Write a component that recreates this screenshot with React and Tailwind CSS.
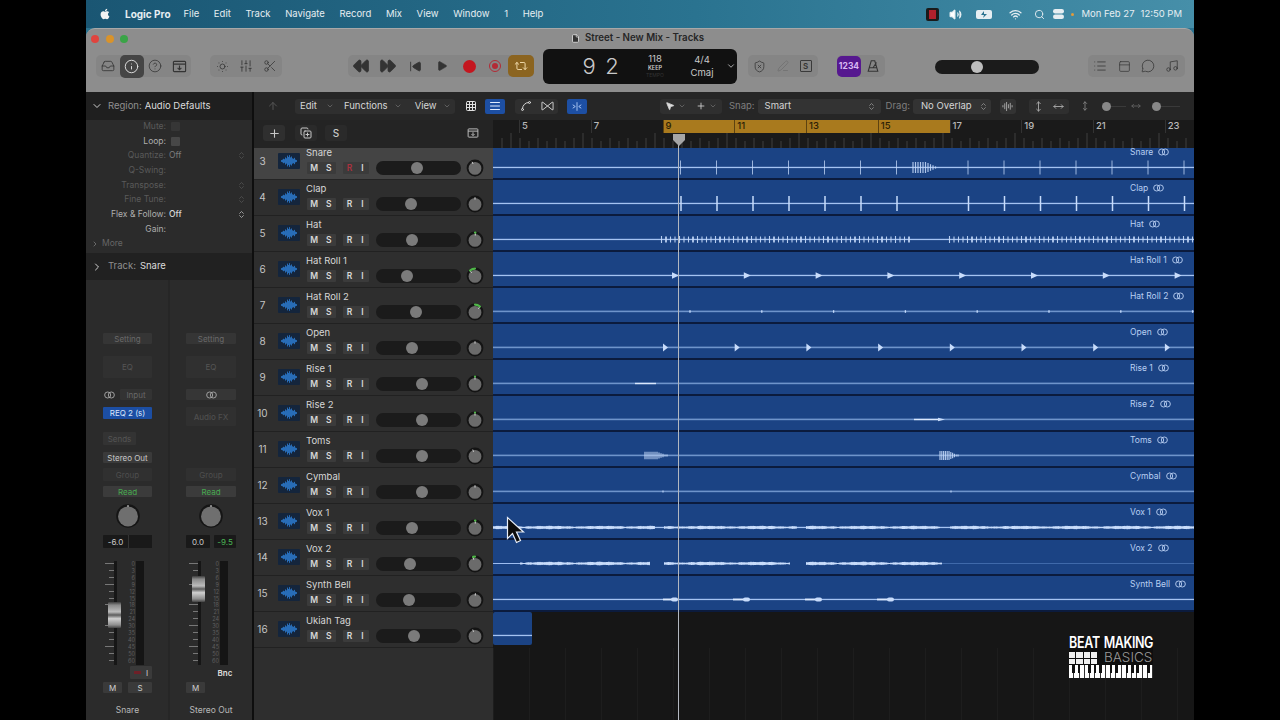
import React from 'react';
import { Inbox, Info, CircleHelp, SunDim, SlidersVertical, Scissors, Rewind, FastForward, SkipBack, Play, Repeat2, ChevronDown, ChevronRight, ChevronsUpDown, ShieldX, PenLine, List, PanelTop, MessageCircle, Music, Plus, CopyPlus, Volume2, Wifi, Search, MousePointer2, Grid3x3, AlignJustify, Spline, ArrowUp, File, MoveHorizontal, MoveVertical, AudioLines } from 'lucide-react';
import { FaApple } from 'react-icons/fa';

const tracks = [
  { n: 3, name: 'Snare', knob: 417, pan: -8, sel: true },
  { n: 4, name: 'Clap', knob: 411, pan: 0 },
  { n: 5, name: 'Hat', knob: 412, pan: 1, g: 6 },
  { n: 6, name: 'Hat Roll 1', knob: 407, pan: -14, g: 40 },
  { n: 7, name: 'Hat Roll 2', knob: 416, pan: 14, g: 40 },
  { n: 8, name: 'Open', knob: 412, pan: 0 },
  { n: 9, name: 'Rise 1', knob: 422, pan: 0, g: 8 },
  { n: 10, name: 'Rise 2', knob: 422, pan: 0, g: 8 },
  { n: 11, name: 'Toms', knob: 422, pan: -6 },
  { n: 12, name: 'Cymbal', knob: 422, pan: 0 },
  { n: 13, name: 'Vox 1', knob: 412, pan: 1, g: 8 },
  { n: 14, name: 'Vox 2', knob: 410, pan: -5, g: 24 },
  { n: 15, name: 'Synth Bell', knob: 409, pan: 1 },
  { n: 16, name: 'Ukiah Tag', knob: 414, pan: -6 },
];

const X = (x) => x - 493;
const Y = 23.5;
const range = (a, step, n) => Array.from({ length: n }, (_, i) => a + step * i);

function noise(a, b, scale = 1) {
  let up = '', dn = '';
  for (let x = a; x <= b; x += 1) {
    const m = Math.abs(Math.sin(x * 1.37) * Math.sin(x * 0.31 + 1)) * 0.7 + Math.abs(Math.sin(x * 0.06)) * 0.7;
    const h = (0.45 + m * 1.05) * scale;
    up += `${up ? 'L' : 'M'}${X(x)} ${Y - h} `;
    dn = `L${X(x)} ${Y + h} ` + dn;
  }
  return up + dn + 'Z';
}

const Tick = ({ x, h, w = 1, o = 1 }) => <line x1={X(x)} x2={X(x)} y1={Y - h} y2={Y + h} stroke="#c8dcfb" strokeWidth={w} opacity={o} />;
const Tri = ({ x, h, w }) => <path d={`M${X(x)} ${Y - h}L${X(x) + w} ${Y}L${X(x)} ${Y + h}Z`} fill="#c8dcfb" />;
const Seg = ({ a, b, t = 1.4 }) => <rect x={X(a)} y={Y - t / 2} width={b - a} height={t} fill="#dbe8fd" />;

function Burst({ a, b, h, step = 2.5 }) {
  const xs = [];
  for (let x = a; x < b; x += step) xs.push(x);
  return <>{xs.map((x) => {
    const p = (x - a) / (b - a);
    return <Tick key={x} x={x} w={1.2} h={p < 0.5 ? h : Math.max(1, h * (1 - (p - 0.5) * 2))} o={0.85} />;
  })}</>;
}

const snarePos = [...range(680.5, 36, 7), ...range(968, 36, 7)];
const waves = {
  Snare: <>{snarePos.map((x) => <Tick key={x} x={x} h={7} o={0.75} />)}<Burst a={913} b={938} h={5.5} /></>,
  Clap: <>{snarePos.map((x) => <Tick key={x} x={x + 0.5} h={7.5} w={1.5} />)}</>,
  Hat: <>{[...range(661.5, 4.5, 56), ...range(949.5, 4.5, 55)].map((x, i) => <Tick key={x} x={x} h={i % 4 === 0 ? 3.5 : 3} w={i % 6 === 1 ? 1.8 : 1.1} o={0.9} />)}</>,
  'Hat Roll 1': <>{range(672, 71.8, 8).map((x) => <Tri key={x} x={x} h={3.2} w={7} />)}</>,
  'Hat Roll 2': <>{range(690, 71.8, 8).map((x) => <Tick key={x} x={x} h={1.3} w={1.3} />)}</>,
  Open: <>{range(663, 71.7, 8).map((x) => <Tri key={x} x={x} h={4} w={5} />)}</>,
  'Rise 1': <Seg a={635} b={656} />,
  'Rise 2': <><Seg a={914} b={940} /><Tri x={938} h={1.8} w={7} /></>,
  Toms: <><Burst a={645} b={668} h={3.8} step={2} /><Burst a={940} b={958} h={4.5} step={1.8} /></>,
  Cymbal: <><Tick x={663} h={1} /><Tick x={951} h={1} /></>,
  'Vox 1': <>{[[493, 655], [664, 797], [806, 940], [950, 1194]].map(([a, b]) => <path key={a} d={noise(a, b)} fill="#c8dcfb" />)}</>,
  'Vox 2': <>{[[520, 650], [664, 790], [806, 942]].map(([a, b]) => <path key={a} d={noise(a, b, 1.05)} fill="#c8dcfb" />)}</>,
  'Synth Bell': <>{[[663, 678], [733, 750], [805, 822], [877, 894]].map(([a, b]) => <g key={a}><Seg a={a} b={b - 6} t={1.8} /><rect x={X(b - 7)} y={Y - 2} width={7} height={4} rx={2} fill="#c8dcfb" /></g>)}</>,
  'Ukiah Tag': null,
};
const dim = new Set(['Hat Roll 2', 'Open', 'Rise 1', 'Rise 2', 'Toms', 'Cymbal']);

function Link({ className = '' }) {
  return (
    <svg viewBox="0 0 12 8" className={`w-[11px] h-[8px] ${className}`} fill="none" stroke="currentColor" strokeWidth="1">
      <circle cx="4" cy="4" r="3.3" /><circle cx="8" cy="4" r="3.3" />
    </svg>
  );
}

function Lane({ t }) {
  const last = t.name === 'Ukiah Tag';
  return (
    <div className={`relative flex-1 h-[36px] ${last ? 'bg-[#161616]' : 'bg-[#0b1b3d]'}`}>
      <div className={`relative bg-[#1b4384] ${last ? 'w-[39px] h-[33px] rounded-[2px]' : 'h-[34px]'}`}>
        <svg viewBox={`0 0 ${last ? 39 : 701} 34`} className={`absolute left-0 top-0 ${last ? 'w-[39px]' : 'w-[701px]'} h-[34px]`}>
          {t.name === 'Vox 2' ? (
            <>
              <rect x="0" y="23" width="27" height="1" fill="#9dbcf0" />
              <rect x="449" y="23" width="252" height="1" fill="#3f69aa" />
            </>
          ) : (
            <rect x="0" y={dim.has(t.name) ? 22.6 : 22.8} width="701" height={dim.has(t.name) ? 1.6 : 1.3} fill={dim.has(t.name) ? '#6f94cb' : '#a5c3f2'} />
          )}
          {waves[t.name]}
        </svg>
        {!last && (
          <div className="absolute left-[637px] top-[4px] flex items-center gap-[5px] text-[8.5px] leading-[7px] text-[#b9cff2]">
            <span>{t.name}</span>
            <Link />
          </div>
        )}
      </div>
    </div>
  );
}

function MiniButton({ label, red }) {
  return <span className={`flex-1 text-center text-[8.5px] font-semibold leading-[12px] ${red ? 'text-[#a8323f]' : 'text-[#d8d8d8]'}`}>{label}</span>;
}

function Pan({ t }) {
  const deg = t.pan * 3;
  const a = ((deg - 90) * Math.PI) / 180;
  const r = 7.4;
  const ex = 9 + r * Math.cos(a);
  const ey = 9 + r * Math.sin(a);
  return (
    <svg viewBox="0 0 18 18" className="w-[18px] h-[18px] ml-[5px] shrink-0">
      <circle cx="9" cy="9" r="8.4" fill="#141414" />
      <circle cx="9" cy="9.4" r="6.4" fill="#6b6b6b" />
      <line x1={9 + 4.8 * Math.cos(a)} y1={9.4 + 4.8 * Math.sin(a)} x2={9 + 7.2 * Math.cos(a)} y2={9.4 + 7.2 * Math.sin(a)} stroke="#d0d0d0" strokeWidth="1" />
      {t.g ? <path d={`M9 1.6A${r} ${r} 0 0 ${t.pan < 0 ? 0 : 1} ${ex} ${ey}`} fill="none" stroke="#4fb548" strokeWidth="2.2" strokeLinecap="round" /> : null}
    </svg>
  );
}

function TrackWave() {
  const hs = [1, 1.5, 2.5, 2, 4, 3, 6, 4.5, 6.5, 4, 5, 3, 2.5, 3.5, 1.5, 1];
  return (
    <svg viewBox="0 0 22 16" className="w-[22px] h-[16px]">
      {hs.map((h, i) => <line key={i} x1={3.5 + i} x2={3.5 + i} y1={8 - h * 0.9} y2={8 + h * 0.9} stroke="#2a76c6" strokeWidth="0.9" />)}
    </svg>
  );
}

function TrackHeader({ t }) {
  return (
    <div className={`relative flex w-[239px] h-[36px] shrink-0 border-b ${t.sel ? 'bg-[#444444] border-[#242424]' : 'bg-[#2e2e2e] border-[#212121]'}`}>
      <div className="w-[17px] flex items-center justify-center text-[10px] text-[#c4c4c4]">{t.n}</div>
      <div className="ml-[7px] mt-[9px] w-[22px] h-[16px] bg-[#14253c] rounded-[1px]">
        <TrackWave />
      </div>
      <div className="ml-[6px] pt-[3px]">
        <div className="text-[9.5px] leading-[12px] text-[#d6d6d6] whitespace-nowrap">{t.name}</div>
        <div className="flex items-center h-[18px]">
          <div className="flex w-[29px] h-[12px] ml-[1px] bg-[#3b3b3b] rounded-[1px]"><MiniButton label="M" /><MiniButton label="S" /></div>
          <div className="flex w-[26px] h-[12px] ml-[7px] bg-[#3b3b3b] rounded-[1px]"><MiniButton label="R" red={t.sel} /><MiniButton label="I" /></div>
          <div className="relative w-[85px] h-[14px] ml-[7px] rounded-full bg-[#1b1b1b]">
            <span className="absolute top-[1px] w-[12px] h-[12px] rounded-full bg-[#7b7b7b]" style={{ left: t.knob - 376 - 6 }} />
          </div>
          <Pan t={t} />
        </div>
      </div>
    </div>
  );
}

const Btn = ({ children, className = '' }) => <div className={`flex items-center justify-center ${className}`}>{children}</div>;

function TrayDown({ size = 15, className = '' }) {
  return (
    <svg viewBox="0 0 16 16" width={size} height={size} fill="none" stroke="currentColor" strokeWidth="1.2" className={className}>
      <rect x="1.5" y="2.5" width="13" height="11" rx="1" />
      <path d="M1.5 5.5h13M8 7v4M6 9.5l2 2 2-2" />
    </svg>
  );
}

function Toolbar() {
  return (
    <div className="relative h-[64px] shrink-0 bg-[#8d8d8d] rounded-t-[9px] border-t border-[#a8a8a8] text-[#343434]">
      <div className="flex items-center h-[19px] pl-[5px]">
        <span className="w-[8px] h-[8px] rounded-full bg-[#e0443e]" />
        <span className="w-[8px] h-[8px] rounded-full bg-[#d9932a] ml-[7px]" />
        <span className="w-[8px] h-[8px] rounded-full bg-[#3aa447] ml-[6px]" />
        <File size={9} className="ml-[443px] text-[#eee] fill-[#333]" />
        <span className="ml-[5px] text-[9.7px] font-semibold text-[#262626] whitespace-nowrap">Street - New Mix - Tracks</span>
      </div>
      <div className="flex items-center h-[36px]">
        <div className="flex items-center h-[22px] ml-[10px] w-[95px] bg-[#858585] rounded-[5px]">
          <Btn className="w-[24px]"><Inbox size={14} strokeWidth={1.4} /></Btn>
          <Btn className="w-[24px] h-[23px] bg-[#454545] rounded-[5px] text-[#e2e2e2]"><Info size={15} strokeWidth={1.5} /></Btn>
          <Btn className="w-[24px]"><CircleHelp size={14} strokeWidth={1.3} /></Btn>
          <Btn className="w-[24px]"><TrayDown /></Btn>
        </div>
        <div className="flex items-center h-[22px] ml-[19px] w-[72px] bg-[#858585] rounded-[5px]">
          <Btn className="w-[24px]"><SunDim size={15} strokeWidth={1.3} /></Btn>
          <Btn className="w-[24px]"><SlidersVertical size={14} strokeWidth={1.4} /></Btn>
          <Btn className="w-[24px]"><Scissors size={14} strokeWidth={1.3} /></Btn>
        </div>
        <div className="flex items-center h-[22px] ml-[66px] w-[186px] bg-[#858585] rounded-[5px]">
          <Btn className="w-[26px]"><Rewind size={18} fill="#333" strokeWidth={1} /></Btn>
          <Btn className="w-[28px]"><FastForward size={18} fill="#333" strokeWidth={1} /></Btn>
          <Btn className="w-[26px]"><SkipBack size={13} fill="#333" strokeWidth={1.6} /></Btn>
          <Btn className="w-[28px]"><Play size={12} fill="#333" strokeWidth={1} /></Btn>
          <Btn className="w-[26px]"><span className="w-[13px] h-[13px] rounded-full bg-[#c4161f]" /></Btn>
          <Btn className="w-[26px]"><span className="flex items-center justify-center w-[12px] h-[12px] rounded-full border border-[#b32a35]"><span className="w-[6px] h-[6px] rounded-full bg-[#b32a35]" /></span></Btn>
          <Btn className="w-[26px] h-[22px] bg-[#8b6420] rounded-[5px] text-[#f4dfb0]"><Repeat2 size={14} strokeWidth={1.6} /></Btn>
        </div>
        <div className="relative flex items-center h-[35px] ml-[9px] w-[194px] bg-[#111111] rounded-[6px] text-[#c9c9c9]">
          <span className="ml-[34px] w-[24px] text-center text-[22px] font-light leading-none">9</span>
          <span className="w-[22px] text-center text-[22px] font-light leading-none">2</span>
          <div className="ml-[19px] w-[26px] text-center leading-none">
            <div className="text-[9.5px]">118</div>
            <div className="text-[5.5px] font-semibold mt-[2px]">KEEP</div>
            <div className="text-[5px] text-[#333] mt-[2px]">TEMPO</div>
          </div>
          <div className="ml-[21px] w-[26px] text-center leading-none text-[9.5px]">
            <div>4/4</div>
            <div className="mt-[4px]">Cmaj</div>
          </div>
          <ChevronDown size={10} className="ml-[11px]" />
        </div>
        <div className="flex items-center h-[22px] ml-[11px] w-[70px] bg-[#858585] rounded-[5px]">
          <Btn className="w-[24px] ml-[-1px]"><ShieldX size={13} strokeWidth={1.4} /></Btn>
          <Btn className="w-[23px] text-[#747474]"><PenLine size={12} /></Btn>
          <Btn className="w-[23px]"><span className="w-[12px] h-[12px] border border-[#3a3a3a] rounded-[1px] text-[8px] font-semibold leading-[10px] text-center">S</span></Btn>
        </div>
        <div className="flex items-center h-[22px] ml-[19px] w-[48px] bg-[#858585] rounded-[5px]">
          <Btn className="w-[24px] h-[21px] bg-[#56188f] rounded-[5px] text-[8.5px] font-bold text-[#d8b8f2]">1234</Btn>
          <Btn className="w-[24px]">
            <svg viewBox="0 0 16 16" width="14" height="14" fill="none" stroke="currentColor" strokeWidth="1.2"><path d="M6 2h4l3.5 12h-11zM4 10h8M8 10l4-6" /></svg>
          </Btn>
        </div>
        <div className="relative w-[104px] h-[14px] ml-[50px] mt-[2px] rounded-full bg-[#1b1b1b]">
          <span className="absolute left-[36px] top-[1px] w-[12px] h-[12px] rounded-full bg-[#bdbdbd]" />
        </div>
        <div className="flex items-center h-[22px] ml-[49px] w-[97px] bg-[#858585] rounded-[5px]">
          <Btn className="w-[24px]"><List size={14} strokeWidth={1.3} /></Btn>
          <Btn className="w-[24px]"><PanelTop size={13} strokeWidth={1.3} /></Btn>
          <Btn className="w-[24px]"><MessageCircle size={14} strokeWidth={1.3} /></Btn>
          <Btn className="w-[24px]"><Music size={14} strokeWidth={1.3} /></Btn>
        </div>
      </div>
    </div>
  );
}

function MenuBar() {
  const items = ['File', 'Edit', 'Track', 'Navigate', 'Record', 'Mix', 'View', 'Window', '1', 'Help'];
  return (
    <div className="h-[28px] shrink-0 flex items-center bg-[linear-gradient(90deg,#1a5673,#2a7390_55%,#468fa9)] text-[#e6eef2] text-[9.5px]">
      <FaApple size={12} className="ml-[13px] text-[#f2f2f2]" />
      <span className="ml-[14px] font-bold text-[10px]">Logic Pro</span>
      <div className="flex gap-[14.6px] ml-[13px]">{items.map((m) => <span key={m}>{m}</span>)}</div>
      <span className="ml-auto flex items-center justify-center w-[13px] h-[13px] rounded-[2px] bg-[#1a1a1a]"><span className="w-[7px] h-[9px] bg-[#b0202c]" /></span>
      <Volume2 size={13} fill="#fff" className="ml-[10px]" />
      <svg viewBox="0 0 18 9" className="w-[18px] h-[9px] ml-[14px]"><rect x="0" y="0" width="16" height="9" rx="2" fill="#e6eef2" /><path d="M8 1L5 5h3l-1 3 4-4H8z" fill="#2a7390" /></svg>
      <Wifi size={13} strokeWidth={2.4} className="ml-[15px]" />
      <Search size={11} strokeWidth={2} className="ml-[12px]" />
      <svg viewBox="0 0 12 12" className="w-[12px] h-[12px] ml-[8px]" fill="#e6eef2"><rect x="0" y="1" width="11" height="4.4" rx="2.2" /><rect x="0" y="6.6" width="11" height="4.4" rx="2.2" /></svg>
      <span className="w-[3px] h-[3px] rounded-full bg-[#e29b3a] ml-[6px]" />
      <span className="ml-[8px] whitespace-nowrap">Mon Feb 27</span>
      <span className="ml-[6px] mr-[12px] whitespace-nowrap">12:50 PM</span>
    </div>
  );
}

const params = [
  ['Mute:', 'd', 'box-d'], ['Loop:', 'n', 'box'], ['Quantize:', 'd', 'Off'], ['Q-Swing:', 'd', ''], ['Transpose:', 'd', 'arrows'], ['Fine Tune:', 'd', 'arrows'], ['Flex & Follow:', 'n', 'Off!'], ['Gain:', 'n', ''],
];

function Inspector() {
  return (
    <div className="w-[168px] shrink-0 flex flex-col bg-[#2b2b2b] border-r-2 border-[#0e0e0e]">
      <div className="h-[28px] shrink-0 flex items-center bg-[#1f1f1f]">
        <ChevronDown size={12} className="ml-[5px] text-[#cfcfcf]" />
        <span className="ml-[5px] text-[9.5px] text-[#8f8f8f]">Region:</span>
        <span className="ml-[3px] text-[9.5px] text-[#dcdcdc]">Audio Defaults</span>
      </div>
      <div className="h-[134px] shrink-0 -mt-[1px] text-[8.5px]">
        {params.map(([l, k, v]) => (
          <div key={l} className="relative flex items-center h-[14.7px]">
            <span className={`w-[80px] text-right whitespace-nowrap ${k === 'd' ? 'text-[#5a5a5a]' : 'text-[#aeaeae]'}`}>{l}</span>
            {v === 'box' && <span className="ml-[5px] w-[9px] h-[9px] bg-[#474747] rounded-[1px]" />}
            {v === 'box-d' && <span className="ml-[5px] w-[9px] h-[9px] bg-[#363636] rounded-[1px]" />}
            {v === 'Off' && <span className="ml-[3px] text-[#7d7d7d]">Off</span>}
            {v === 'Off!' && <span className="ml-[3px] text-[#d8d8d8] font-medium">Off</span>}
            {(v === 'Off' || v === 'arrows' || v === 'Off!') && <ChevronsUpDown size={9} className={`absolute left-[151px] ${v === 'Off!' ? 'text-[#bdbdbd]' : 'text-[#555]'}`} />}
          </div>
        ))}
        <div className="flex items-center h-[14.7px] pl-[5px] text-[#666]"><ChevronRight size={8} className="text-[#888]" /><span className="ml-[3px]">More</span></div>
      </div>
      <div className="h-[27px] shrink-0 flex items-center bg-[#212121]">
        <ChevronRight size={12} className="ml-[5px] text-[#cfcfcf]" />
        <span className="ml-[5px] text-[9.5px] text-[#8f8f8f]">Track:</span>
        <span className="ml-[4px] text-[9.5px] text-[#dcdcdc]">Snare</span>
      </div>
      <div className="flex-1 flex">
        <Strip first />
        <Strip />
      </div>
    </div>
  );
}

const Box = ({ children, className = '' }) => <div className={`flex items-center justify-center rounded-[1px] text-[8px] ${className}`}>{children}</div>;
const scale = ['0', '3', '6', '9', '12', '15', '18', '21', '24', '30', '35', '40', '45', '50', '60'];

function Fader({ first }) {
  const ticks = range(2, 6.9, 15);
  return (
    <div className={`relative h-[104px] mt-[13px] flex ${first ? 'ml-[1px]' : 'ml-[2px]'}`}>
      <div className="relative w-[10px]">
        {ticks.map((y, i) => <span key={y} className={`absolute right-0 h-[1px] bg-[#777] ${i % 3 === 0 ? 'w-[9px]' : 'w-[5px]'}`} style={{ top: y }} />)}
      </div>
      <div className="w-[3px] bg-[#161616] h-full" />
      <div className={`absolute left-[4px] w-[13px] h-[26px] rounded-[1px] bg-[linear-gradient(#3d3d3d,#8a8a8a_12%,#bdbdbd_38%,#5c5c5c_50%,#d0d0d0_64%,#8f8f8f_88%,#444)] ${first ? 'top-[41px]' : 'top-[15px]'}`} />
      <div className="relative w-[18px] h-full">
        {scale.map((s, i) => <span key={s} className="absolute right-[0px] text-[5.5px] leading-[6px] text-[#5f5f5f]" style={{ top: i * 6.9 }}>{s}</span>)}
      </div>
      <div className="ml-[1px] w-[8px] bg-[#151515] h-full" />
    </div>
  );
}

function Strip({ first }) {
  const x = first ? 'ml-[17px] w-[49px]' : 'ml-[16px] w-[50px]';
  return (
    <div className={`flex-1 ${first ? 'border-r-[2px] border-[#262626]' : ''}`}>
      <div className={x}>
        <Box className="mt-[53px] h-[11px] bg-[#353535] text-[#6a6a6a]">Setting</Box>
        <Box className="mt-[12px] h-[22px] bg-[#303030] text-[#555]">EQ</Box>
        {first ? (
          <div className="mt-[11px] h-[11px] flex">
            <Box className="w-[13px] text-[#a8a8a8]"><Link /></Box>
            <Box className="ml-[4px] flex-1 bg-[#333] text-[#686868]">Input</Box>
          </div>
        ) : (
          <Box className="mt-[11px] h-[11px] bg-[#363636] text-[#a8a8a8]"><Link /></Box>
        )}
        {first ? (
          <Box className="mt-[7px] h-[12px] bg-[#1c4ea3] text-[#d9e6fb] text-[8.5px]">REQ 2 (s)</Box>
        ) : (
          <Box className="mt-[7px] h-[19px] bg-[#303030] text-[#4e4e4e] font-medium mb-[-7px]">Audio FX</Box>
        )}
        {first ? <Box className="mt-[13px] h-[13px] w-[33px] bg-[#333] text-[#555]">Sends</Box> : <div className="mt-[13px] h-[13px]" />}
        {first ? <Box className="mt-[7px] h-[11px] bg-[#3a3a3a] text-[#c8c8c8]">Stereo Out</Box> : <div className="mt-[7px] h-[11px]" />}
        <Box className="mt-[5px] h-[13px] bg-[#303030] text-[#4e4e4e]">Group</Box>
        <Box className="mt-[5px] h-[11px] bg-[#3b3b3b] text-[#48a950]">Read</Box>
        <div className="mt-[7px] h-[24px] flex justify-center">
          <svg viewBox="0 0 24 24" className="w-[24px] h-[24px]"><circle cx="12" cy="12" r="11.8" fill="#151515" /><circle cx="12" cy="12.4" r="10" fill="#6f6f6f" /><line x1="12" y1="1" x2="12" y2="3" stroke="#ddd" /></svg>
        </div>
        {first ? (
          <div className="mt-[7px] h-[13px] flex text-[8.5px]">
            <Box className="w-[25px] bg-[#191919] text-[#c8c8c8]">-6.0</Box>
            <div className="flex-1 bg-[#191919] border-l border-[#333]" />
          </div>
        ) : (
          <div className="mt-[7px] h-[13px] flex gap-[4px]">
            <Box className="w-[24px] bg-[#191919] text-[#c8c8c8]">0.0</Box>
            <Box className="flex-1 bg-[#191919] text-[#4bb755]">-9.5</Box>
          </div>
        )}
        <Fader first={first} />
        <div className="mt-[1px] h-[13px] flex justify-end">
          {first ? (
            <Box className="w-[22px] bg-[#3a3a3a] text-[#d0d0d0]"><span className="w-[7px] h-[3px] bg-[#6e2028] mr-[5px]" /><span>I</span></Box>
          ) : (
            <Box className="w-[16px] text-[#dedede] font-semibold mr-[3px]">Bnc</Box>
          )}
        </div>
        <div className="mt-[3px] h-[11px] flex justify-between text-[8.5px]">
          <Box className="w-[19px] bg-[#3a3a3a] text-[#d0d0d0]">M</Box>
          {first && <Box className="w-[24px] bg-[#3a3a3a] text-[#d0d0d0]">S</Box>}
        </div>
        <div className="mt-[11px] h-[12px] text-center text-[8.5px] leading-[12px] text-[#b8b8b8] whitespace-nowrap">{first ? 'Snare' : 'Stereo Out'}</div>
      </div>
    </div>
  );
}

function ArrangeBar() {
  const chev = <ChevronDown size={8} className="text-[#777]" />;
  return (
    <div className="h-[28px] shrink-0 flex items-center bg-[#262626] text-[9.5px] text-[#d6d6d6]">
      <ArrowUp size={12} className="ml-[13px] text-[#555]" />
      <div className="flex items-center h-[15px] ml-[16px] w-[160px] rounded-[3px] bg-[#2f2f2f]">
        <span className="ml-[5px]">Edit</span><span className="ml-[9px]">{chev}</span>
        <span className="ml-[10px]">Functions</span><span className="ml-[6px]">{chev}</span>
        <span className="ml-[13px]">View</span><span className="ml-[6px]">{chev}</span>
      </div>
      <Grid3x3 size={12} className="ml-[10px] text-[#e0e0e0]" />
      <Btn className="ml-[8px] w-[20px] h-[15px] rounded-[2px] bg-[#1d4fa3]"><AlignJustify size={12} className="text-[#e0ebff]" /></Btn>
      <div className="flex items-center justify-around ml-[10px] w-[43px] h-[15px] rounded-[3px] bg-[#2f2f2f]">
        <Spline size={12} />
        <svg viewBox="0 0 14 10" className="w-[13px] h-[10px]" fill="none" stroke="currentColor"><path d="M1 1h1l10 8h1M1 9h1l10-8h1M1 1v8M13 1v8" /></svg>
      </div>
      <Btn className="ml-[9px] w-[20px] h-[15px] rounded-[2px] bg-[#1d4fa3] text-[#b9d2fb] text-[9px]">
        <svg viewBox="0 0 14 12" className="w-[12px] h-[11px]" fill="none" stroke="currentColor"><path d="M7 1v10M2 4l3 2-3 2M12 4L9 6l3 2" /></svg>
      </Btn>
      <div className="flex items-center justify-around ml-[73px] w-[62px] h-[15px] rounded-[3px] bg-[#2f2f2f]">
        <span className="flex items-center gap-[3px]"><MousePointer2 size={10} fill="#ddd" />{chev}</span>
        <span className="flex items-center gap-[3px]"><Plus size={10} />{chev}</span>
      </div>
      <span className="ml-[7px] text-[#7f7f7f]">Snap:</span>
      <div className="flex items-center justify-between ml-[3px] w-[123px] h-[15px] pl-[7px] pr-[5px] rounded-[3px] bg-[#333]"><span>Smart</span><ChevronsUpDown size={9} className="text-[#999]" /></div>
      <span className="ml-[5px] text-[#7f7f7f]">Drag:</span>
      <div className="flex items-center justify-between ml-[3px] w-[78px] h-[15px] pl-[8px] pr-[3px] rounded-[3px] bg-[#333] whitespace-nowrap"><span>No Overlap</span><ChevronsUpDown size={9} className="text-[#999]" /></div>
      <Btn className="ml-[9px] w-[16px] h-[15px] rounded-[3px] bg-[#333]"><AudioLines size={11} className="text-[#aaa]" /></Btn>
      <div className="flex items-center justify-around ml-[13px] w-[40px] h-[15px] rounded-[3px] bg-[#2f2f2f] text-[#aaa]">
        <MoveVertical size={11} /><MoveHorizontal size={11} />
      </div>
      <MoveVertical size={10} className="ml-[11px] text-[#888]" />
      <div className="relative flex items-center ml-[12px] w-[24px]"><span className="w-[9px] h-[9px] rounded-full bg-[#888]" /><span className="flex-1 h-[1px] bg-[#3a3a3a]" /></div>
      <MoveHorizontal size={10} className="ml-[5px] text-[#666]" />
      <div className="relative flex items-center ml-[11px] w-[28px]"><span className="w-[9px] h-[9px] rounded-full bg-[#888]" /><span className="flex-1 h-[1px] bg-[#3a3a3a]" /></div>
    </div>
  );
}

function Ruler() {
  const bars = [5, 7, 9, 11, 13, 15, 17, 19, 21, 23];
  const cyc = new Set([9, 11, 13, 15]);
  return (
    <div className="relative flex-1 h-[28px] bg-[#1a1a1a] overflow-hidden">
      <div className="flex pl-[26px] h-[13px]">
        {bars.map((b) => (
          <div key={b} className={`w-[71.75px] shrink-0 border-l pl-[2px] text-[9.5px] font-medium leading-[12px] ${cyc.has(b) ? 'bg-[#a97a1e] border-[#5d4210] text-[#2b1f06]' : 'border-[#333] text-[#b8b8b8]'}`}>{b}</div>
        ))}
      </div>
      <svg viewBox="0 0 701 15" className="w-[701px] h-[15px]">
        {range(9, 9, 77).map((x, i) => <line key={x} x1={x} x2={x} y1={(i + 1) % 8 === 2 ? 0 : i % 2 ? 8 : 5} y2="15" stroke="#3f3f3f" strokeWidth="1" />)}
      </svg>
    </div>
  );
}

function Logo() {
  const white = [0, 1, 2, 3, 4, 5, 6, 7, 8, 9, 10, 11, 12, 13, 14];
  return (
    <div className="absolute left-[983px] top-[638px] w-[84px] h-[40px] text-white bg-[#0e0e0e] flex flex-col">
      <div className="flex h-[13px] items-end leading-none">
        <span className="text-[12.5px] font-semibold tracking-[-0.3px] w-[35px] scale-y-125 origin-bottom">BEAT</span>
        <span className="text-[12.5px] font-semibold tracking-[-0.4px] scale-y-125 origin-bottom">MAKING</span>
      </div>
      <div className="flex h-[14px] items-start">
        <div className="grid grid-cols-4 gap-[1px] w-[28px] mt-[1px]">
          {Array.from({ length: 8 }, (_, i) => <span key={i} className="h-[5.5px] bg-[#f0f0f0]" />)}
        </div>
        <span className="ml-[7px] text-[13.5px] font-light leading-[13px] tracking-[0px] text-[#9a9a9a]">BASICS</span>
      </div>
      <div className="relative flex h-[13px] bg-white">
        {Array.from({ length: 16 }, (_, i) => <span key={i} className="flex-1 border-r border-[#333]" />)}
        <div className="absolute inset-0 flex justify-around px-[2px]">
          {white.map((k) => <span key={k} className={`w-[2.5px] h-[8px] ${k % 7 === 2 || k % 7 === 6 ? 'bg-transparent' : 'bg-[#111]'}`} />)}
        </div>
      </div>
    </div>
  );
}

export default function App() {
  return (
    <div className="w-[1280px] h-[720px] overflow-hidden bg-black flex justify-center font-[Inter,sans-serif]">
      <div className="relative w-[1108px] h-[720px] flex flex-col bg-[#2a7390]">
        <MenuBar />
        <Toolbar />
        <div className="flex-1 min-h-0 flex">
          <Inspector />
          <div className="flex-1 min-w-0 flex flex-col bg-[#161616]">
            <ArrangeBar />
            <div className="relative z-10 h-[28px] shrink-0 flex">
              <div className="w-[239px] shrink-0 flex items-center pb-[2px] bg-[#242424] text-[#c8c8c8]">
                <Btn className="ml-[9px] w-[22px] h-[16px] rounded-[3px] bg-[#2f2f2f]"><Plus size={13} /></Btn>
                <Btn className="ml-[10px] w-[22px] h-[16px] rounded-[3px] bg-[#2a2a2a]"><CopyPlus size={12} /></Btn>
                <Btn className="ml-[8px] w-[22px] h-[16px] rounded-[3px] bg-[#2a2a2a] text-[10px] font-medium">S</Btn>
                <Btn className="ml-[118px] w-[16px] h-[16px]"><TrayDown size={12} /></Btn>
              </div>
              <Ruler />
            </div>
            <div className="flex-1 min-h-0 flex flex-col overflow-hidden">
              <div className="-mt-[4px]">
                {tracks.map((t) => (
                  <div key={t.n} className="flex">
                    <TrackHeader t={t} />
                    <Lane t={t} />
                  </div>
                ))}
              </div>
              <div className="flex-1 flex">
                <div className="w-[239px] shrink-0 bg-[#2e2e2e]" />
                <div className="flex-1 bg-[repeating-linear-gradient(90deg,#1d1d1d_0,#1d1d1d_1px,#161616_1px,#161616_36px)]" />
              </div>
            </div>
          </div>
        </div>
        <div className="absolute left-[592px] top-[135px] bottom-0 w-[1px] bg-[#b3b8c0] z-20" />
        <svg viewBox="0 0 14 14" className="absolute left-[585.5px] top-[133px] w-[14px] h-[14px] z-20"><path d="M1 1h12v6l-6 6-6-6z" fill="#a6a6a6" /></svg>
        <svg viewBox="0 0 20 30" className="absolute left-[420px] top-[516px] w-[20px] h-[30px] z-20">
          <path d="M1.5 1.5v21l5-5 4 9 4-2-4-8.5h7z" fill="#0c0c0c" stroke="#e8eef8" strokeWidth="1.2" />
        </svg>
        <Logo />
      </div>
    </div>
  );
}
